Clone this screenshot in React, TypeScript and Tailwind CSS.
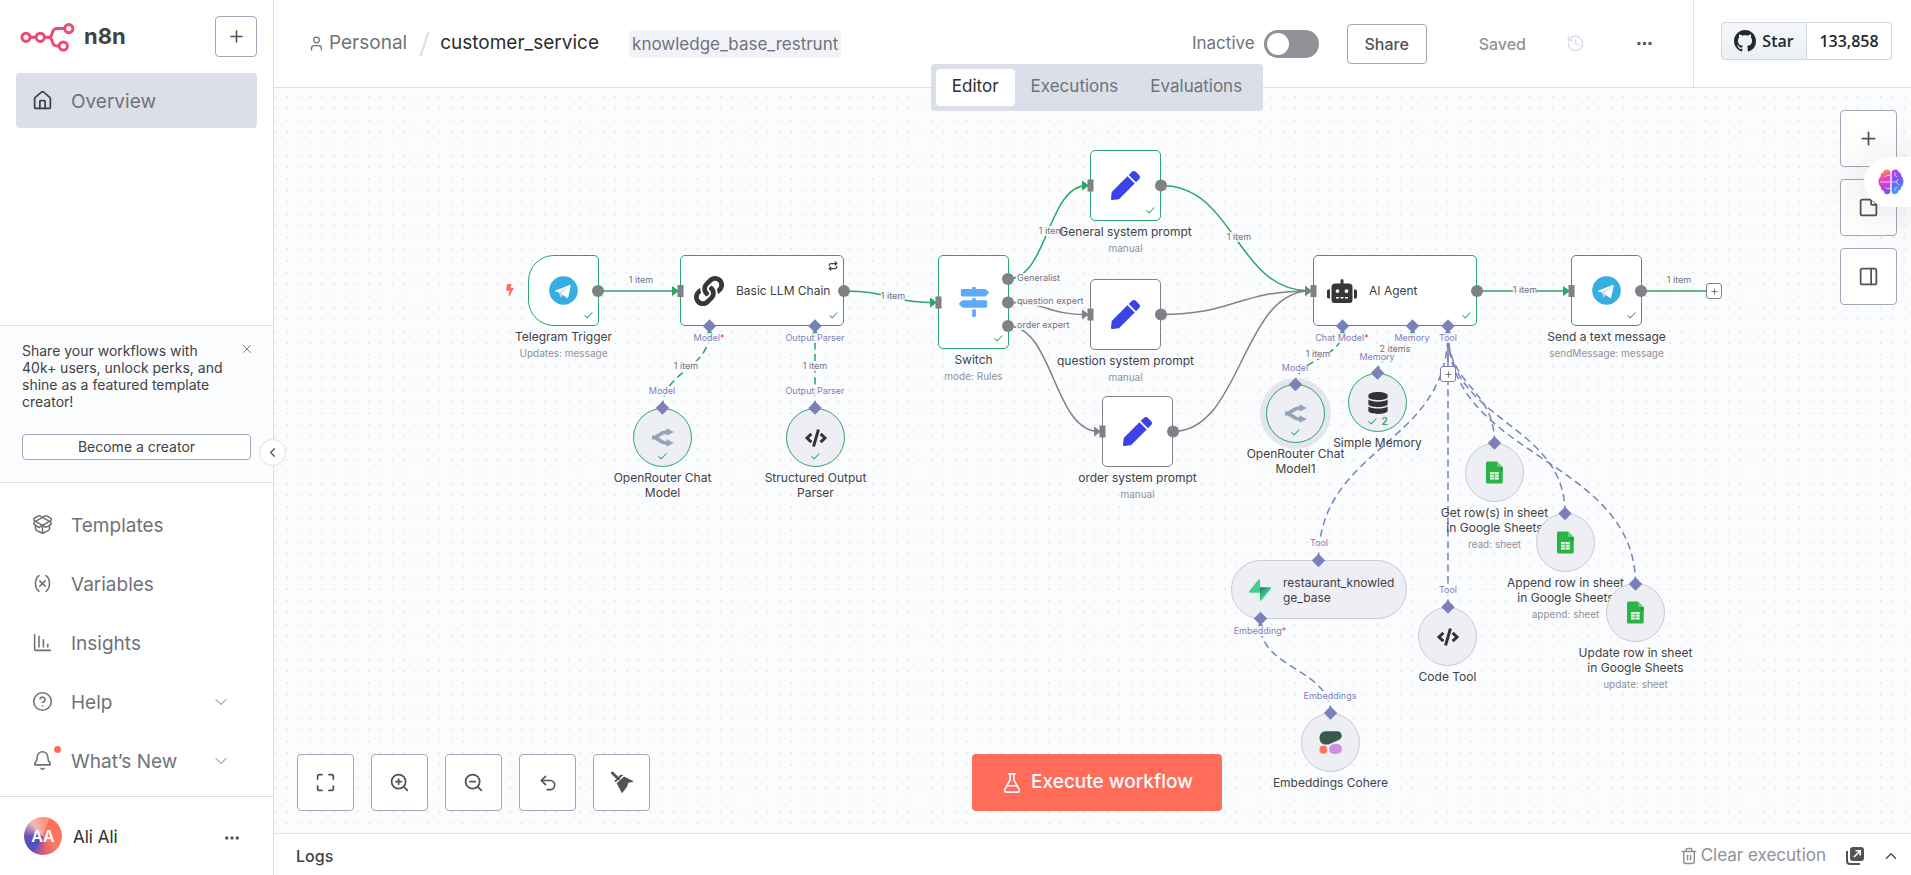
import type { ReactNode } from "react";
import {
  Bell,
  ChartColumnDecreasing,
  Check,
  ChevronDown,
  ChevronLeft,
  ChevronUp,
  Ellipsis,
  FlaskConical,
  History,
  House,
  Maximize,
  PackageOpen,
  PanelRight,
  Plus,
  Repeat,
  StickyNote,
  Trash2,
  Undo2,
  User,
  Variable,
  X,
  ZoomIn,
  ZoomOut,
  CircleQuestionMark,
} from "lucide-react";
import { FaBolt, FaCode, FaDatabase, FaLink, FaMapSigns, FaPen, FaRobot } from "react-icons/fa";

const GREEN = "#29a568";
const GRAY = "#7e8186";
const VIOLET = "#7c80b8";

/* ---------- drawings ---------- */

function N8nMark() {
  return (
    <svg width="55" height="30" viewBox="20 23 55 30" fill="none" stroke="#ea4b71" strokeWidth="3" aria-hidden="true">
      <circle cx="26" cy="38.3" r="4.1" />
      <circle cx="40.3" cy="38.3" r="4.1" />
      <circle cx="68.8" cy="29.6" r="4.1" />
      <circle cx="63.3" cy="47" r="4.1" />
      <path d="M30.2 38.3h6M44.5 38.3H48c3 0 3.6-1.400 4.200-4.200.700-3 1.600-4.500 4.800-4.500h7.600M48 38.300c3 0 3.600 1.400 4.200 4.200.7 3 1.600 4.500 4.800 4.500h2.100" />
    </svg>
  );
}

function GithubMark() {
  return (
    <svg width="22" height="22" viewBox="0 0 16 16" fill="#24292f" aria-hidden="true">
      <path d="M8 0C3.58 0 0 3.58 0 8c0 3.54 2.29 6.53 5.47 7.59.4.07.55-.17.55-.38 0-.19-.01-.82-.01-1.49-2.01.37-2.53-.49-2.69-.94-.09-.23-.48-.94-.82-1.13-.28-.15-.68-.52-.01-.53.63-.01 1.08.58 1.23.82.72 1.21 1.87.87 2.33.66.07-.52.28-.87.51-1.07-1.78-.2-3.64-.89-3.64-3.95 0-.87.31-1.59.82-2.15-.08-.2-.36-1.02.08-2.12 0 0 .67-.21 2.2.82.64-.18 1.32-.27 2-.27s1.36.09 2 .27c1.53-1.04 2.2-.82 2.2-.82.44 1.1.16 1.92.08 2.12.51.56.82 1.27.82 2.15 0 3.07-1.87 3.75-3.65 3.95.29.25.54.73.54 1.48 0 1.07-.01 1.93-.01 2.2 0 .21.15.46.55.38A8.01 8.01 0 0 0 16 8c0-4.42-3.58-8-8-8z" />
    </svg>
  );
}

function Telegram() {
  return (
    <svg width="29" height="29" viewBox="0 0 29 29" aria-hidden="true">
      <circle cx="14.500" cy="14.500" r="14.300" fill="#37aee2" />
      <path d="M11.900 21.300c-.5 0-.4-.2-.6-.6l-1.400-4.500 10.500-6.500" fill="#c8daea" />
      <path d="M11.900 21.300c.4 0 .5-.2.700-.4l1.900-1.900-2.400-1.400" fill="#a9c9dd" />
      <path d="M12.100 17.600l5.800 4.300c.7.400 1.100.2 1.300-.6l2.400-11.100c.2-1-.4-1.400-1-1.100L6.700 14.400c-.9.400-.9.900-.2 1.100l3.600 1.100 8.200-5.200c.4-.2.800-.1.500.200" fill="#fff" />
    </svg>
  );
}

function OpenRouter() {
  return (
    <svg width="22" height="19" viewBox="0 0 22 19" fill="none" aria-hidden="true">
      <path d="M0 9.500h2C6 9.500 8 4 15 3.800M2 9.500c4 0 6 5.500 13 5.700" stroke="#94a3b8" strokeWidth="3.800" />
      <path d="M14.500.3L21.800 4l-7.300 3.800zM14.500 11.200l7.300 3.800-7.300 3.700z" fill="#94a3b8" />
    </svg>
  );
}

function Sheets() {
  return (
    <svg width="17" height="23" viewBox="0 0 17 23" aria-hidden="true">
      <path d="M1.500.500h9.500l5.700 5.700v14.800a1.500 1.500 0 0 1-1.500 1.500H1.500A1.500 1.500 0 0 1 0 21V2A1.500 1.500 0 0 1 1.500.500z" fill="#28b446" />
      <path d="M11 .500l5.700 5.700H12.500A1.500 1.500 0 0 1 11 4.700z" fill="#6ace7c" />
      <path d="M11.500 5.800l.9.400h4.300v4.500z" fill="#219b38" />
      <path d="M4 11.200h8.700v7.300H4z" fill="#fff" />
      <path d="M4 13.700h8.700M4 16.100h8.700M8.300 12v6.500" stroke="#28b446" strokeWidth=".8" />
    </svg>
  );
}

function Supabase() {
  return (
    <svg width="22" height="22" viewBox="0 0 22 22" aria-hidden="true">
      <defs>
        <linearGradient id="sb" x1="11" y1="9" x2="17" y2="15" gradientUnits="userSpaceOnUse">
          <stop stopColor="#1f7a55" />
          <stop offset="1" stopColor="#3ecf8e" />
        </linearGradient>
      </defs>
      <path d="M11 8.200h9.800c1 0 1.500 1 .9 1.800l-9.300 11.500c-.5.600-1.400.300-1.400-.5z" fill="url(#sb)" />
      <path d="M11 13.800H1.200c-1 0-1.500-1-.9-1.800L9.600.500c.5-.6 1.400-.3 1.400.5z" fill="#3ecf8e" />
    </svg>
  );
}

function Cohere() {
  return (
    <svg width="23" height="23" viewBox="0 0 23 23" aria-hidden="true">
      <path d="M6.500.300h11.700C21 .3 22.700 2.200 22.700 4.700c0 2-1.100 3.500-3 4.300l-8 3.400c-1.700.8-3 1.200-4.700 1.200C3.200 13.600.500 10.700.500 7S3 .3 6.500.300z" fill="#39594d" />
      <rect x="10" y="13.200" width="13" height="9.800" rx="4.900" fill="#d18ee2" transform="rotate(-6 16 18)" />
      <ellipse cx="4.300" cy="18.700" rx="3.900" ry="4.100" fill="#ff7759" />
    </svg>
  );
}

function Broom() {
  return (
    <svg width="24" height="24" viewBox="0 0 24 24" fill="#525356" aria-hidden="true">
      <path d="M2.400 1.900L8.500 8" stroke="#525356" strokeWidth="2.800" strokeLinecap="round" />
      <path d="M4.300 9.700L6.800 8 10 4l2.800-.3.400.5-7.700 7z" />
      <path d="M6.700 12.300L14 5.400l9.200 4.600-.6 1-4.300.7-1.300 4.100L12 22.200z" />
    </svg>
  );
}

function PopOut() {
  return (
    <svg width="18" height="18" viewBox="0 0 18 18" fill="none" aria-hidden="true">
      <rect x="4" y="0" width="14" height="14" rx="3" fill="#525356" />
      <path d="M1 4v10a3 3 0 0 0 3 3h10" stroke="#525356" strokeWidth="2" />
      <path d="M8 10l6-6M9.500 3.800H14.200V8.500" stroke="#fff" strokeWidth="1.600" />
    </svg>
  );
}

function BrainMark() {
  return (
    <svg width="26" height="26" viewBox="0 0 26 26" aria-hidden="true">
      <defs>
        <linearGradient id="bl" x1="3" y1="1" x2="11" y2="25" gradientUnits="userSpaceOnUse">
          <stop stopColor="#ff9a3c" />
          <stop offset=".35" stopColor="#f43fc0" />
          <stop offset="1" stopColor="#7c4dff" />
        </linearGradient>
        <linearGradient id="br" x1="14" y1="1" x2="24" y2="24" gradientUnits="userSpaceOnUse">
          <stop stopColor="#c13de8" />
          <stop offset=".5" stopColor="#6f5bf5" />
          <stop offset="1" stopColor="#2fb4ff" />
        </linearGradient>
      </defs>
      <path d="M12.300 3.500C12 1.500 10.500.6 8.800.6 6.800.6 5.600 1.900 5.300 3.300 3.300 3.800 2.300 5.500 2.700 7.600 1 8.600.3 11 .6 13c0 2.300.9 3.900 2.200 4.700-.1 2 .9 3.500 2.700 4C6 24 7.300 25.300 9.200 25.300c1.700 0 2.900-1 3.100-2.800z" fill="url(#bl)" />
      <path d="M13.700 3.500C14 1.500 15.500.6 17.200.6c2 0 3.200 1.300 3.500 2.700 2 .5 3 2.200 2.600 4.300 1.700 1 2.400 3.400 2.100 5.400 0 2.300-.9 3.900-2.200 4.700.1 2-.9 3.500-2.700 4-.5 2.300-1.800 3.600-3.700 3.600-1.700 0-2.900-1-3.100-2.800z" fill="url(#br)" />
      <path d="M12 6.500H8.500L7 8M2 13h10M12 19.500H9L7.500 18M14 13h4l2.500-3M18 13l3 3M17 3.500v3l2 1.500M17 22v-2.500l2-1.500" stroke="#fff" strokeWidth="1" fill="none" opacity=".7" />
    </svg>
  );
}

/* ---------- sidebar ---------- */

function NavItem({ icon, label, active, chevron, dot }: { icon: ReactNode; label: string; active?: boolean; chevron?: boolean; dot?: boolean }) {
  return (
    <a
      href="#"
      className={
        active
          ? "flex h-[55px] items-center rounded bg-[#dbdfe9] pl-4 pr-[26px] text-[#414244]"
          : "flex h-[55px] items-center rounded pl-4 pr-[26px] text-[#717278]"
      }
    >
      <span className="relative">
        {icon}
        {dot && <span className="absolute -right-2 -top-1 size-[7px] rounded-full bg-[#ff6d5a]" />}
      </span>
      <span className="ml-[18px] flex-1 pt-[3px] text-[19px] text-[#717278]">{label}</span>
      {chevron && <ChevronDown size={20} strokeWidth={1.200} />}
    </a>
  );
}

function Sidebar() {
  return (
    <aside className="relative flex w-[274px] shrink-0 flex-col border-r border-[#dbdfe7] bg-white">
      <div className="flex items-center pl-5 pr-4 pt-4">
        <N8nMark />
        <span className="ml-[9px] text-[22px] font-bold text-[#414244]">n8n</span>
        <button aria-label="Create" className="ml-auto flex h-[41px] w-[42px] items-center justify-center rounded border border-[#a3a8b8] text-[#525356]">
          <Plus size={19} strokeWidth={2} />
        </button>
      </div>
      <nav className="px-4 pt-4">
        <NavItem active icon={<House size={21} />} label="Overview" />
      </nav>
      <div className="mt-auto border-y border-[#dbdfe7] bg-[#fbfcfe] px-[22px] pb-[22px] pt-4">
        <div className="flex items-start justify-between">
          <p className="w-[204px] text-sm leading-[17px] text-[#414244]">
            Share your workflows with 40k+ users, unlock perks, and shine as a featured template creator!
          </p>
          <button aria-label="Dismiss" className="-mr-[3px] text-[#717278]">
            <X size={14} strokeWidth={1.500} />
          </button>
        </div>
        <button className="mt-6 h-[26px] w-full rounded border border-[#a3a8b8] bg-white pb-px text-sm leading-none text-[#414244]">Become a creator</button>
      </div>
      <nav className="flex flex-col gap-1 px-4 pb-2 pt-[14px]">
        <NavItem icon={<PackageOpen size={21} strokeWidth={1.800} />} label="Templates" />
        <NavItem icon={<Variable size={21} strokeWidth={1.800} />} label="Variables" />
        <NavItem icon={<ChartColumnDecreasing size={21} strokeWidth={1.800} />} label="Insights" />
        <NavItem chevron icon={<CircleQuestionMark size={21} strokeWidth={1.800} />} label="Help" />
        <NavItem chevron dot icon={<Bell size={21} strokeWidth={1.800} />} label="What’s New" />
      </nav>
      <div className="flex h-[79px] items-center border-t border-[#dbdfe7] pl-6 pr-8">
        <span className="flex size-[38px] items-center justify-center rounded-full bg-[conic-gradient(from_20deg,#ff6d5a_0deg,#ff7a66_110deg,#c85a80_165deg,#4b4fc4_200deg,#6353b8_250deg,#f3b9b4_300deg,#ff8a78_360deg)] text-base font-semibold text-white">
          AA
        </span>
        <span className="ml-[11px] pt-1 text-[17px] text-[#2d2e30]">Ali Ali</span>
        <button aria-label="Account menu" className="ml-auto pt-1 text-[#525356]">
          <Ellipsis size={18} strokeWidth={2.500} />
        </button>
      </div>
      <button aria-label="Collapse sidebar" className="absolute -right-[13px] top-[439px] z-20 flex size-[27px] items-center justify-center rounded-full border border-[#dbdfe7] bg-white text-[#525356]">
        <ChevronLeft size={15} />
      </button>
    </aside>
  );
}

/* ---------- header ---------- */

function Header() {
  return (
    <header className="relative z-10 flex h-[88px] shrink-0 border-b border-[#dbdfe7] bg-white">
      <div className="flex min-w-0 flex-1 items-center pl-[34px] pr-[39px]">
        <a href="#" className="flex items-center text-[19px] text-[#717278]">
          <User size={17} strokeWidth={1.800} />
          <span className="ml-1">Personal</span>
        </a>
        <svg width="11" height="24" viewBox="0 0 11 24" className="ml-3" aria-hidden="true">
          <path d="M1.500 24L9.500 0" stroke="#dbdfe7" strokeWidth="2.200" />
        </svg>
        <h1 className="ml-[10px] text-[19px] text-[#2d2e30]">customer_service</h1>
        <span className="ml-[30px] rounded bg-[#f1f2f8] px-[3px] text-[17px] leading-7 text-[#717278]">knowledge_base_restrunt</span>
        <label htmlFor="active" className="ml-auto text-[17px] text-[#717278]">
          Inactive
        </label>
        <input
          id="active"
          type="checkbox"
          className="ml-[9px] h-7 w-[55px] shrink-0 appearance-none rounded-full bg-[#909298] before:m-[3px] before:block before:size-[22px] before:rounded-full before:bg-white"
        />
        <button className="ml-7 h-10 w-20 shrink-0 rounded border border-[#a3a8b8] text-base font-medium text-[#525356]">Share</button>
        <span className="ml-[52px] text-base font-medium text-[#909298]">Saved</span>
        <button aria-label="Workflow history" className="ml-10 text-[#dbdfe7]">
          <History size={19} />
        </button>
        <button aria-label="Workflow menu" className="ml-[50px] text-[#525356]">
          <Ellipsis size={19} strokeWidth={2.500} />
        </button>
      </div>
      <div className="flex shrink-0 items-center border-l border-[#dbdfe7] pb-[5px] pl-[27px] pr-[19px] font-['Open_Sans',sans-serif] text-base font-semibold text-[#24292f]">
        <a href="#" className="flex h-[38px] w-[86px] items-center justify-center gap-[6px] rounded-l border border-[#d0d7de] bg-linear-to-b from-[#f6f8fa] to-[#ebf0f4]">
          <GithubMark />
          Star
        </a>
        <a href="#" className="flex h-[38px] w-[85px] items-center justify-center rounded-r border border-l-0 border-[#d0d7de]">
          133,858
        </a>
      </div>
      <div className="absolute inset-x-0 top-16 flex justify-center pl-[9px]">
        <div role="tablist" className="flex h-[47px] items-center rounded bg-[#dbdfe9] px-[5px] text-[17px] text-[#717278]">
          <button role="tab" aria-selected="true" className="h-[37px] rounded bg-white px-4 pb-0.5 text-[#2d2e30]">
            Editor
          </button>
          <button role="tab" aria-selected="false" className="h-[37px] px-4 pb-0.5">
            Executions
          </button>
          <button role="tab" aria-selected="false" className="h-[37px] px-4 pb-0.5">
            Evaluations
          </button>
        </div>
      </div>
    </header>
  );
}

/* ---------- workflow graph ---------- */

type Pt = [number, number];

const horizontal = ([x1, y1]: Pt, [x2, y2]: Pt) => {
  const m = (x1 + x2) / 2;
  return `M${x1} ${y1}C${m} ${y1} ${m} ${y2} ${x2} ${y2}`;
};

const vertical = ([x1, y1]: Pt, [x2, y2]: Pt) => {
  const m = (y1 + y2) / 2;
  return `M${x1} ${y1}C${x1} ${m} ${x2} ${m} ${x2} ${y2}`;
};

const mainEdges: { from: Pt; to: Pt; color: string }[] = [
  { from: [598, 291], to: [677, 291], color: GREEN },
  { from: [844, 291], to: [935, 302.500], color: GREEN },
  { from: [1008, 279], to: [1087, 185.500], color: GREEN },
  { from: [1008, 302.500], to: [1087, 314.500], color: GRAY },
  { from: [1008, 326], to: [1099, 431.500], color: GRAY },
  { from: [1161, 185.500], to: [1310, 291], color: GREEN },
  { from: [1161, 314.500], to: [1310, 291], color: GRAY },
  { from: [1173, 431.500], to: [1310, 291], color: GRAY },
  { from: [1477, 291], to: [1568, 291], color: GREEN },
];

const subEdges: { from: Pt; to: Pt; color: string }[] = [
  { from: [662.500, 408], to: [709.500, 332], color: GREEN },
  { from: [815, 408], to: [815, 332], color: GREEN },
  { from: [1295.500, 385], to: [1342.500, 332], color: GREEN },
  { from: [1377.500, 373], to: [1412.500, 332], color: GREEN },
  { from: [1318.500, 560], to: [1448, 332], color: VIOLET },
  { from: [1448, 607], to: [1448, 332], color: VIOLET },
  { from: [1494.500, 443], to: [1448, 332], color: VIOLET },
  { from: [1565, 513], to: [1448, 332], color: VIOLET },
  { from: [1635.500, 584], to: [1448, 332], color: VIOLET },
  { from: [1330.500, 713], to: [1260.500, 625], color: VIOLET },
];

const outputs: Pt[] = [
  [598, 291], [844, 291], [1008, 279], [1008, 302.500], [1008, 326], [1161, 185.500],
  [1161, 314.500], [1173, 431.500], [1477, 291], [1641, 291],
];

const inputs: Pt[] = [
  [680.500, 291], [938.500, 302.500], [1090.500, 185.500], [1090.500, 314.500], [1102.500, 431.500], [1313.500, 291], [1571.500, 291],
];

const diamonds: Pt[] = [
  [709.500, 326], [815, 326], [1342.500, 326], [1412.500, 326], [1448, 326], [662.500, 408], [815, 408],
  [1295.500, 384.500], [1377.500, 373], [1494.500, 443], [1565, 513.500], [1635.500, 584], [1318.500, 560.500],
  [1448, 607], [1330.500, 713], [1260.500, 618.500],
];

type Label = { x: number; y: number; text: string; required?: boolean };

const edgeLabels: Label[] = [
  { x: 641, y: 280, text: "1 item" },
  { x: 893, y: 296, text: "1 item" },
  { x: 1051, y: 231, text: "1 item" },
  { x: 1239, y: 237, text: "1 item" },
  { x: 1525, y: 290, text: "1 item" },
  { x: 1679, y: 280, text: "1 item" },
  { x: 686, y: 366, text: "1 item" },
  { x: 815, y: 366, text: "1 item" },
  { x: 1318, y: 354, text: "1 item" },
  { x: 1395, y: 349, text: "2 items" },
];

const portLabels: Label[] = [
  { x: 709, y: 338, text: "Model", required: true },
  { x: 815, y: 338, text: "Output Parser" },
  { x: 662, y: 391, text: "Model" },
  { x: 815, y: 391, text: "Output Parser" },
  { x: 1342, y: 338, text: "Chat Model", required: true },
  { x: 1412, y: 338, text: "Memory" },
  { x: 1448, y: 338, text: "Tool" },
  { x: 1295, y: 368, text: "Model" },
  { x: 1377, y: 357, text: "Memory" },
  { x: 1319, y: 543, text: "Tool" },
  { x: 1448, y: 590, text: "Tool" },
  { x: 1260, y: 631, text: "Embedding", required: true },
  { x: 1330, y: 696, text: "Embeddings" },
];

const outputLabels: Label[] = [
  { x: 1016, y: 278, text: "Generalist" },
  { x: 1016, y: 301, text: "question expert" },
  { x: 1016, y: 325, text: "order expert" },
];

type GraphNode = {
  x: number;
  y: number;
  kind: "box" | "trigger" | "tall" | "wide" | "circle" | "pill";
  icon: ReactNode;
  title: string;
  subtitle?: string;
  done?: boolean;
  count?: number;
  selected?: boolean;
  retry?: boolean;
};

const pen = <FaPen size={29} color="#3b42e8" />;

const nodes: GraphNode[] = [
  { x: 528, y: 255, kind: "trigger", icon: <Telegram />, title: "Telegram Trigger", subtitle: "Updates: message", done: true },
  { x: 680, y: 255, kind: "wide", icon: <FaLink size={30} color="#373737" />, title: "Basic LLM Chain", done: true, retry: true },
  { x: 633, y: 408, kind: "circle", icon: <OpenRouter />, title: "OpenRouter Chat Model", done: true },
  { x: 786, y: 408, kind: "circle", icon: <FaCode size={22} color="#333" />, title: "Structured Output Parser", done: true },
  { x: 938, y: 255, kind: "tall", icon: <FaMapSigns size={30} color="#60a9f8" />, title: "Switch", subtitle: "mode: Rules", done: true },
  { x: 1090, y: 150, kind: "box", icon: pen, title: "General system prompt", subtitle: "manual", done: true },
  { x: 1090, y: 279, kind: "box", icon: pen, title: "question system prompt", subtitle: "manual" },
  { x: 1102, y: 396, kind: "box", icon: pen, title: "order system prompt", subtitle: "manual" },
  { x: 1313, y: 255, kind: "wide", icon: <FaRobot size={30} color="#373737" />, title: "AI Agent", done: true },
  { x: 1266, y: 384, kind: "circle", icon: <OpenRouter />, title: "OpenRouter Chat Model1", done: true, selected: true },
  { x: 1348, y: 373, kind: "circle", icon: <FaDatabase size={22} color="#333" />, title: "Simple Memory", done: true, count: 2 },
  { x: 1571, y: 255, kind: "box", icon: <Telegram />, title: "Send a text message", subtitle: "sendMessage: message", done: true },
  { x: 1231, y: 560, kind: "pill", icon: <Supabase />, title: "restaurant_knowledge_base" },
  { x: 1465, y: 443, kind: "circle", icon: <Sheets />, title: "Get row(s) in sheet in Google Sheets", subtitle: "read: sheet" },
  { x: 1536, y: 513, kind: "circle", icon: <Sheets />, title: "Append row in sheet in Google Sheets", subtitle: "append: sheet" },
  { x: 1606, y: 583, kind: "circle", icon: <Sheets />, title: "Update row in sheet in Google Sheets", subtitle: "update: sheet" },
  { x: 1418, y: 607, kind: "circle", icon: <FaCode size={22} color="#333" />, title: "Code Tool" },
  { x: 1301, y: 713, kind: "circle", icon: <Cohere />, title: "Embeddings Cohere" },
];

const shapes = {
  box: "size-[71px] justify-center rounded-[5px] bg-white",
  trigger: "size-[71px] justify-center rounded-[5px] rounded-l-[26px] bg-white",
  tall: "h-[94px] w-[71px] justify-center rounded-[5px] bg-white",
  wide: "h-[71px] w-[164px] rounded-[5px] bg-white pl-[13px]",
  circle: "size-[59px] justify-center rounded-full bg-[#eeeff5]",
  pill: "h-[59px] w-[176px] rounded-full bg-[#eeeff5] pl-[17px]",
};

function borderOf(n: GraphNode) {
  if (n.done) return "border-[#29a568]";
  return n.kind === "box" ? "border-[#7e8186]" : "border-[#c8c8d8]";
}

function NodeView({ n }: { n: GraphNode }) {
  const inner = n.kind === "wide" || n.kind === "pill";
  return (
    <div className="absolute flex flex-col items-center" style={{ left: n.x, top: n.y }}>
      <div
        className={`relative flex items-center border ${shapes[n.kind]} ${borderOf(n)} ${n.selected ? "ring-[6px] ring-[#e3e6ee]" : ""}`}
      >
        {n.icon}
        {n.kind === "wide" && <span className="ml-3 text-xs text-[#414244]">{n.title}</span>}
        {n.kind === "pill" && <span className="ml-3 w-[112px] break-all text-xs leading-[15px] text-[#414244]">{n.title}</span>}
        {n.retry && <Repeat size={10} strokeWidth={3} className="absolute right-[5px] top-[5px] text-[#414244]" />}
        {n.done && (
          <span
            className={
              n.kind === "circle"
                ? "absolute inset-x-0 bottom-1 flex items-center justify-center gap-[3px] text-[10px] font-semibold leading-3 text-[#29a568]"
                : "absolute bottom-1 right-1 text-[#29a568]"
            }
          >
            <Check size={11} strokeWidth={2.200} />
            {n.count}
          </span>
        )}
      </div>
      {!inner && (
        <div className="flex w-0 flex-col items-center pt-[3px] text-center leading-[15px]">
          <span className={n.kind === "circle" ? "w-[118px] text-xs leading-[15px] text-[#414244]" : "whitespace-nowrap text-xs leading-[15px] text-[#414244]"}>
            {n.title}
          </span>
          {n.subtitle && <span className="mt-0.5 whitespace-nowrap text-[10px] leading-[15px] text-[#909298]">{n.subtitle}</span>}
        </div>
      )}
    </div>
  );
}

function Tag({ l, className }: { l: Label; className: string }) {
  return (
    <span className={`absolute -translate-y-1/2 whitespace-nowrap bg-[#fbfcfe]/85 text-[9px] leading-[10px] ${className}`} style={{ left: l.x, top: l.y }}>
      {l.text}
      {l.required && <span className="text-[#f0374a]">*</span>}
    </span>
  );
}

function AddNode({ x, y, tone }: { x: number; y: number; tone: string }) {
  return (
    <button aria-label="Add node" className={`absolute flex size-4 items-center justify-center rounded-[3px] border bg-white text-[#525356] ${tone}`} style={{ left: x, top: y }}>
      <Plus size={9} strokeWidth={2} />
    </button>
  );
}

function Graph() {
  return (
    <div className="absolute -left-[274px] -top-[88px]">
      <svg width="1" height="1" className="absolute left-0 top-0 overflow-visible" fill="none" strokeWidth="1.500" aria-hidden="true">
        {mainEdges.map((e) => (
          <path key={`${e.from}-${e.to}`} d={horizontal(e.from, e.to)} stroke={e.color} />
        ))}
        <path d="M1641 291H1707" stroke="#5abb88" strokeWidth="2" />
        {subEdges.map((e) => (
          <path key={`${e.from}-${e.to}`} d={vertical(e.from, e.to)} stroke={e.color} strokeDasharray="7.300 4.400" />
        ))}
        <path d="M1448 326V366" stroke={VIOLET} />
        {mainEdges.map((e) => (
          <path key={`a${e.from}`} d={`M${e.to[0] - 5} ${e.to[1] - 5}l7 5l-7 5z`} fill={e.to[0] === 1310 ? GRAY : e.color} />
        ))}
        {subEdges.map((e) => (
          <path key={`b${e.from}`} d={`M${e.to[0]} ${e.to[1] - 3}l4 6h-8z`} fill={e.color} />
        ))}
      </svg>
      {portLabels.map((l) => (
        <Tag key={`${l.x}-${l.y}`} l={l} className="-translate-x-1/2 text-[#7c80b8]" />
      ))}
      {edgeLabels.map((l) => (
        <Tag key={`${l.x}-${l.y}`} l={l} className="-translate-x-1/2 text-[#717278]" />
      ))}
      {outputLabels.map((l) => (
        <Tag key={`${l.x}-${l.y}`} l={l} className="px-px text-[#717278]" />
      ))}
      {nodes.map((n) => (
        <NodeView key={n.title + n.x} n={n} />
      ))}
      <FaBolt size={12} color="#ff6d5a" className="absolute left-[504px] top-[284px]" />
      <svg width="1" height="1" className="absolute left-0 top-0 overflow-visible" aria-hidden="true">
        {outputs.map(([x, y]) => (
          <circle key={`${x}-${y}`} cx={x} cy={y} r="6" fill={GRAY} />
        ))}
        {inputs.map(([x, y]) => (
          <rect key={`${x}-${y}`} x={x - 3} y={y - 6} width="6" height="12" fill={GRAY} />
        ))}
        {diamonds.map(([x, y]) => (
          <path key={`${x}-${y}`} d={`M${x} ${y - 6.700}l6.700 6.700l-6.700 6.700l-6.700 -6.700z`} fill={VIOLET} />
        ))}
      </svg>
      <AddNode x={1706} y={283} tone="border-[#7e8186]" />
      <AddNode x={1440} y={366} tone="border-[#7c80b8]" />
    </div>
  );
}

function ToolButton({ label, children }: { label: string; children: ReactNode }) {
  return (
    <button aria-label={label} className="flex size-[57px] items-center justify-center rounded border border-[#a3a8b8] bg-white text-[#525356]">
      {children}
    </button>
  );
}

function Canvas() {
  return (
    <section className="relative min-h-0 flex-1 overflow-hidden bg-[#fbfcfe]">
      <svg className="absolute inset-0 size-full" aria-hidden="true">
        <pattern id="dots" x="7.200" y="2.900" width="11.720" height="11.720" patternUnits="userSpaceOnUse">
          <circle cx="5.860" cy="5.860" r=".6" fill="#aeb0b8" />
        </pattern>
        <rect width="100%" height="100%" fill="url(#dots)" />
      </svg>
      <Graph />
      <div className="absolute bottom-[22px] left-[23px] flex gap-[17px]">
        <ToolButton label="Zoom to fit">
          <Maximize size={21} />
        </ToolButton>
        <ToolButton label="Zoom in">
          <ZoomIn size={21} />
        </ToolButton>
        <ToolButton label="Zoom out">
          <ZoomOut size={21} />
        </ToolButton>
        <ToolButton label="Reset zoom">
          <Undo2 size={20} />
        </ToolButton>
        <ToolButton label="Tidy up">
          <Broom />
        </ToolButton>
      </div>
      <div className="pointer-events-none absolute inset-x-0 bottom-[22px] flex justify-center pl-[9px]">
        <button className="pointer-events-auto flex h-[57px] items-center gap-2 rounded bg-[#ff6d5a] px-[29px] text-[19px] font-medium text-white">
          <FlaskConical size={22} strokeWidth={1.800} />
          Execute workflow
        </button>
      </div>
      <div className="absolute right-[14px] top-[22px] flex flex-col gap-3">
        <ToolButton label="Add node">
          <Plus size={21} />
        </ToolButton>
        <ToolButton label="Add sticky note">
          <StickyNote size={21} />
        </ToolButton>
        <ToolButton label="Toggle panel">
          <PanelRight size={21} />
        </ToolButton>
      </div>
      <button aria-label="Assistant" className="absolute right-0 top-[69px] flex h-[50px] w-[47px] items-center rounded-l-full bg-white pl-[14px] shadow-[0_4px_50px_rgba(0,0,0,0.16)]">
        <BrainMark />
      </button>
    </section>
  );
}

export default function App() {
  return (
    <div className="flex h-screen w-full overflow-hidden bg-white font-[Inter,sans-serif] text-[#414244]">
      <Sidebar />
      <main className="flex min-w-0 flex-1 flex-col">
        <Header />
        <Canvas />
        <footer className="flex h-[42px] shrink-0 items-center border-t border-[#dbdfe7] bg-white pl-[22px] pr-[11px] pt-0.5">
          <h2 className="text-base font-medium text-[#414244]">Logs</h2>
          <button className="ml-auto flex items-center gap-[3px] text-[17px] text-[#909298]">
            <Trash2 size={18} />
            Clear execution
          </button>
          <button aria-label="Pop out" className="ml-5">
            <PopOut />
          </button>
          <button aria-label="Open logs" className="ml-[18px] text-[#525356]">
            <ChevronUp size={18} />
          </button>
        </footer>
      </main>
    </div>
  );
}
